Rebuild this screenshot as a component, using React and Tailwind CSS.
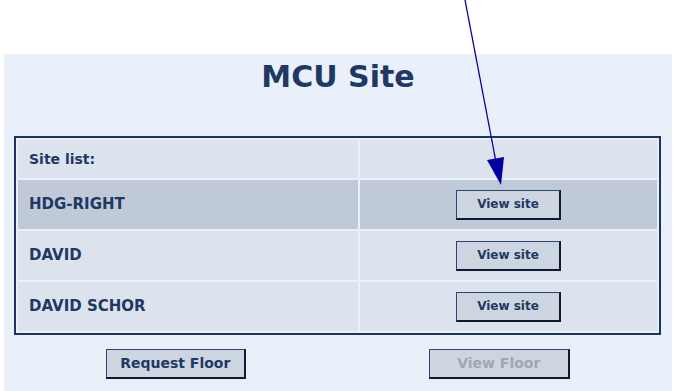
import React from "react";

const sites = [
  { name: "HDG-RIGHT", active: true },
  { name: "DAVID", active: false },
  { name: "DAVID SCHOR", active: false },
];

const btn =
  "bg-[#cdd5e1] border border-[#2e4573] border-r-2 border-b-2 border-r-[#0e1a33] border-b-[#0e1a33] font-bold";

export default function App() {
  return (
    <div
      className="relative w-[674px] h-[391px] bg-white overflow-hidden"
      style={{ fontFamily: '"DejaVu Sans", Verdana, sans-serif' }}
    >
      <div className="mt-[54px] ml-[4px] w-[668px] h-[337px] bg-[#eaf0fa]">
        <h1 className="pt-[8px] text-center text-[30px] leading-[30px] font-bold text-[#1f3864]">
          MCU Site
        </h1>

        <table className="mt-[44px] ml-[10px] w-[647px] border-2 border-[#1c3560] border-separate border-spacing-[2px] text-[#1f3864]">
          <tbody>
            <tr className="h-[38px] bg-[#dce3ed]">
              <td className="w-[340px] pl-[11px] text-[14px] font-bold">Site list:</td>
              <td></td>
            </tr>
            {sites.map((s) => (
              <tr
                key={s.name}
                className={s.active ? "h-[49px] bg-[#bfc9d7]" : "h-[49px] bg-[#dce3ed]"}
              >
                <td className="pl-[11px] text-[15px] font-bold">{s.name}</td>
                <td className="text-center">
                  <button className={`${btn} w-[105px] h-[30px] text-[12px] text-[#1f3864]`}>
                    View site
                  </button>
                </td>
              </tr>
            ))}
          </tbody>
        </table>

        <div className="mt-[14px] ml-[10px] w-[647px] grid grid-cols-2">
          <div className="flex justify-center">
            <button className={`${btn} w-[140px] h-[30px] text-[14px] text-[#1f3864]`}>
              Request Floor
            </button>
          </div>
          <div className="flex justify-center">
            <button className={`${btn} w-[141px] h-[30px] text-[14px] text-[#a3a7ad]`}>
              View Floor
            </button>
          </div>
        </div>
      </div>

      <svg
        className="absolute left-0 top-0 pointer-events-none"
        width="674"
        height="391"
      >
        <line x1="465" y1="0" x2="496" y2="162" stroke="#0000a0" strokeWidth="1.3" />
        <polygon points="501,185 487,160 504,157" fill="#0000a0" />
      </svg>
    </div>
  );
}
